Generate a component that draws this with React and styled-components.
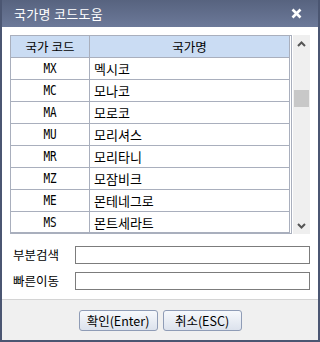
import styled, { createGlobalStyle } from "styled-components"

const Global = createGlobalStyle`
  html, body { margin: 0; padding: 0; background: #fff; }
  body { font-family: "Noto Sans CJK KR", "Noto Sans", sans-serif; }
`

const Window = styled.div`
  width: 320px;
  height: 342px;
  box-sizing: border-box;
  background: #4b5672;
  padding: 0 2px 2px;
  display: flex;
  flex-direction: column;
`

const TitleBar = styled.div`
  height: 27px;
  flex: none;
  display: flex;
  align-items: center;
  justify-content: space-between;
  padding: 0 16px 0 12px;
  background: linear-gradient(#57637f, #6c7999);
  color: #fff;
  font-size: 13px;
  letter-spacing: 0.3px;
`

const Body = styled.div`
  background: #fff;
  padding: 8px 8px 9px;
  display: flex;
  flex-direction: column;
`

const ListArea = styled.div`
  display: flex;
  gap: 1px;
  height: 199px;
`

const Table = styled.div`
  width: 282px;
  box-sizing: border-box;
  border: 1px solid #a9afbd;
  border-right: 3px double #a9afbd;
  border-bottom: 2px solid #a9afbd;
  display: flex;
  flex-direction: column;
  overflow: hidden;
`

const Row = styled.div`
  display: grid;
  grid-template-columns: 79px 1fr;
  height: 21px;
  flex: none;
  border-bottom: ${p => (p.$last ? "none" : "1px solid #a9afbd")};
  background: ${p => (p.$head ? "#cadcf3" : "#fff")};
`

const Cell = styled.div`
  display: flex;
  align-items: center;
  justify-content: ${p => (p.$center ? "center" : "flex-start")};
  padding-left: ${p => (p.$center ? "0" : "4px")};
  border-right: ${p => (p.$first ? "1px solid #a9afbd" : "none")};
  font-size: ${p => (p.$head ? "12.5px" : "13px")};
  color: #000;
`

const Code = styled.span`
  font-family: "DejaVu Sans Mono", "Liberation Mono", monospace;
  font-size: 11px;
  transform: scaleY(1.2);
`

const Scrollbar = styled.div`
  width: 17px;
  background: #efefef;
  display: flex;
  flex-direction: column;
  align-items: center;
`

const Arrow = styled.div`
  height: 17px;
  display: flex;
  align-items: center;
  justify-content: center;
`

const Track = styled.div`
  flex: 1;
  width: 100%;
  display: flex;
  flex-direction: column;
  align-items: center;
`

const Thumb = styled.div`
  width: 15px;
  height: 17px;
  margin-top: 38px;
  background: #c8c8c8;
`

const Form = styled.div`
  margin-top: 11px;
  display: flex;
  flex-direction: column;
  gap: 7px;
`

const FieldRow = styled.div`
  display: flex;
  align-items: center;
`

const Label = styled.label`
  width: 65px;
  padding-left: 3px;
  box-sizing: border-box;
  font-size: 12.5px;
  color: #000;
`

const Input = styled.input`
  width: 235px;
  height: 18px;
  box-sizing: border-box;
  border: 1px solid #7c7c7c;
  margin: 0;
  padding: 0 3px;
  outline: none;
`

const Footer = styled.div`
  flex: 1;
  background: #f0f0f0;
  border-top: 1px solid #d4d4d4;
  display: flex;
  justify-content: center;
  align-items: flex-start;
  padding-top: 10px;
  gap: 5px;
`

const Button = styled.button`
  width: 79px;
  height: 21px;
  padding: 0;
  border: 1px solid #8f9cb6;
  border-radius: 3px;
  background: linear-gradient(#f7f9fc, #dce2ed);
  font-family: "Noto Sans CJK KR", "Noto Sans", sans-serif;
  font-size: 12.5px;
  color: #000;
`

const rows = [
  ["MX", "멕시코"],
  ["MC", "모나코"],
  ["MA", "모로코"],
  ["MU", "모리셔스"],
  ["MR", "모리타니"],
  ["MZ", "모잠비크"],
  ["ME", "몬테네그로"],
  ["MS", "몬트세라트"],
]

const Chevron = ({ up }) => (
  <svg width="9" height="6" viewBox="0 0 9 6">
    <path d={up ? "M1 5 L4.5 1.5 L8 5" : "M1 1 L4.5 4.5 L8 1"} fill="none" stroke="#555" strokeWidth="2" />
  </svg>
)

export default function App() {
  return (
    <>
      <Global />
      <Window>
        <TitleBar>
          <span>국가명 코드도움</span>
          <svg width="11" height="11" viewBox="0 0 11 11">
            <path d="M1.5 1.5 L9.5 9.5 M9.5 1.5 L1.5 9.5" stroke="#fff" strokeWidth="2.6" />
          </svg>
        </TitleBar>
        <Body>
          <ListArea>
            <Table>
              <Row $head>
                <Cell $center $first $head>국가 코드</Cell>
                <Cell $center $head>국가명</Cell>
              </Row>
              {rows.map(([code, name], i) => (
                <Row key={code} $last={i === rows.length - 1}>
                  <Cell $center $first><Code>{code}</Code></Cell>
                  <Cell>{name}</Cell>
                </Row>
              ))}
            </Table>
            <Scrollbar>
              <Arrow><Chevron up /></Arrow>
              <Track><Thumb /></Track>
              <Arrow><Chevron /></Arrow>
            </Scrollbar>
          </ListArea>
          <Form>
            <FieldRow>
              <Label>부분검색</Label>
              <Input />
            </FieldRow>
            <FieldRow>
              <Label>빠른이동</Label>
              <Input />
            </FieldRow>
          </Form>
        </Body>
        <Footer>
          <Button>확인(Enter)</Button>
          <Button>취소(ESC)</Button>
        </Footer>
      </Window>
    </>
  )
}
